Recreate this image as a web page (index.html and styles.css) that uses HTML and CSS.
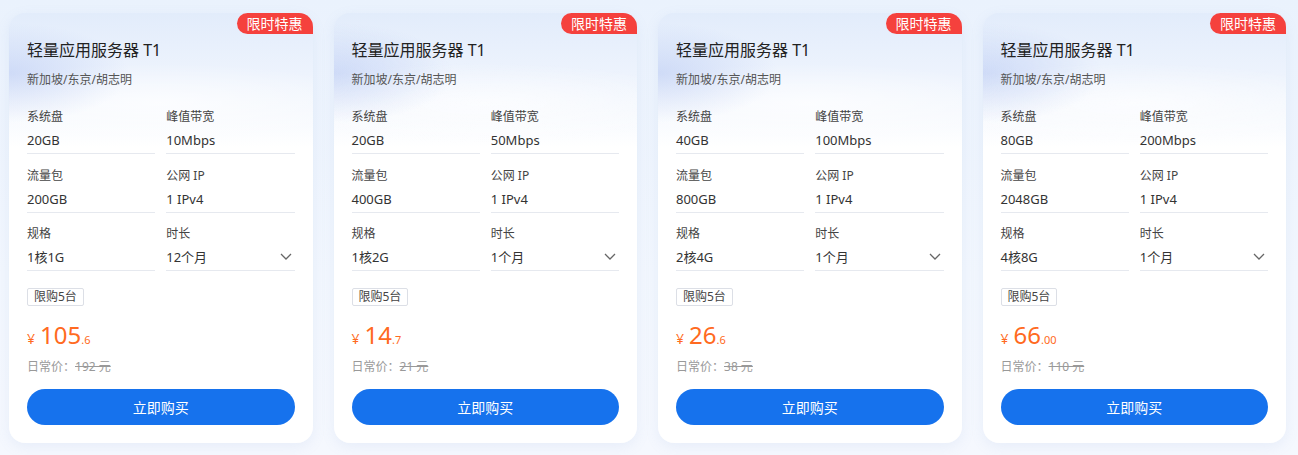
FILE: index.html
```html
<!DOCTYPE html>
<html lang="zh-CN">
<head>
<meta charset="utf-8">
<title>轻量应用服务器</title>
<link rel="stylesheet" href="styles.css">
</head>
<body>
<div class="page">
  <div class="card">
    <div class="badge">限时特惠</div>
    <div class="title">轻量应用服务器 T1</div>
    <div class="sub">新加坡/东京/胡志明</div>
    <div class="specs">
      <div class="spec"><div class="lbl">系统盘</div><div class="val">20GB</div></div>
      <div class="spec"><div class="lbl">峰值带宽</div><div class="val">10Mbps</div></div>
      <div class="spec"><div class="lbl">流量包</div><div class="val">200GB</div></div>
      <div class="spec"><div class="lbl">公网 IP</div><div class="val">1 IPv4</div></div>
      <div class="spec"><div class="lbl">规格</div><div class="val">1核1G</div></div>
      <div class="spec"><div class="lbl">时长</div><div class="val sel">12个月<svg class="chev" viewBox="0 0 12 8" width="12" height="8"><path d="M1 1l5 5 5-5" fill="none" stroke="#666" stroke-width="1.3"/></svg></div></div>
    </div>
    <div class="tag">限购5台</div>
    <div class="price"><span class="yen">¥</span><span class="num">105</span><span class="dec">.6</span></div>
    <div class="orig">日常价：<s>192 元</s></div>
    <button class="buy">立即购买</button>
  </div>
  <div class="card">
    <div class="badge">限时特惠</div>
    <div class="title">轻量应用服务器 T1</div>
    <div class="sub">新加坡/东京/胡志明</div>
    <div class="specs">
      <div class="spec"><div class="lbl">系统盘</div><div class="val">20GB</div></div>
      <div class="spec"><div class="lbl">峰值带宽</div><div class="val">50Mbps</div></div>
      <div class="spec"><div class="lbl">流量包</div><div class="val">400GB</div></div>
      <div class="spec"><div class="lbl">公网 IP</div><div class="val">1 IPv4</div></div>
      <div class="spec"><div class="lbl">规格</div><div class="val">1核2G</div></div>
      <div class="spec"><div class="lbl">时长</div><div class="val sel">1个月<svg class="chev" viewBox="0 0 12 8" width="12" height="8"><path d="M1 1l5 5 5-5" fill="none" stroke="#666" stroke-width="1.3"/></svg></div></div>
    </div>
    <div class="tag">限购5台</div>
    <div class="price"><span class="yen">¥</span><span class="num">14</span><span class="dec">.7</span></div>
    <div class="orig">日常价：<s>21 元</s></div>
    <button class="buy">立即购买</button>
  </div>
  <div class="card">
    <div class="badge">限时特惠</div>
    <div class="title">轻量应用服务器 T1</div>
    <div class="sub">新加坡/东京/胡志明</div>
    <div class="specs">
      <div class="spec"><div class="lbl">系统盘</div><div class="val">40GB</div></div>
      <div class="spec"><div class="lbl">峰值带宽</div><div class="val">100Mbps</div></div>
      <div class="spec"><div class="lbl">流量包</div><div class="val">800GB</div></div>
      <div class="spec"><div class="lbl">公网 IP</div><div class="val">1 IPv4</div></div>
      <div class="spec"><div class="lbl">规格</div><div class="val">2核4G</div></div>
      <div class="spec"><div class="lbl">时长</div><div class="val sel">1个月<svg class="chev" viewBox="0 0 12 8" width="12" height="8"><path d="M1 1l5 5 5-5" fill="none" stroke="#666" stroke-width="1.3"/></svg></div></div>
    </div>
    <div class="tag">限购5台</div>
    <div class="price"><span class="yen">¥</span><span class="num">26</span><span class="dec">.6</span></div>
    <div class="orig">日常价：<s>38 元</s></div>
    <button class="buy">立即购买</button>
  </div>
  <div class="card">
    <div class="badge">限时特惠</div>
    <div class="title">轻量应用服务器 T1</div>
    <div class="sub">新加坡/东京/胡志明</div>
    <div class="specs">
      <div class="spec"><div class="lbl">系统盘</div><div class="val">80GB</div></div>
      <div class="spec"><div class="lbl">峰值带宽</div><div class="val">200Mbps</div></div>
      <div class="spec"><div class="lbl">流量包</div><div class="val">2048GB</div></div>
      <div class="spec"><div class="lbl">公网 IP</div><div class="val">1 IPv4</div></div>
      <div class="spec"><div class="lbl">规格</div><div class="val">4核8G</div></div>
      <div class="spec"><div class="lbl">时长</div><div class="val sel">1个月<svg class="chev" viewBox="0 0 12 8" width="12" height="8"><path d="M1 1l5 5 5-5" fill="none" stroke="#666" stroke-width="1.3"/></svg></div></div>
    </div>
    <div class="tag">限购5台</div>
    <div class="price"><span class="yen">¥</span><span class="num">66</span><span class="dec">.00</span></div>
    <div class="orig">日常价：<s>110 元</s></div>
    <button class="buy">立即购买</button>
  </div>
</div>
</body>
</html>
```

FILE: styles.css
```css
* { box-sizing: border-box; }
html, body { margin: 0; padding: 0; }
body {
  width: 1298px;
  height: 455px;
  overflow: hidden;
  background: linear-gradient(180deg, #eaf2fd 0%, #f2f7fe 60%, #f5f8fe 100%);
  font-family: "Noto Sans", "Noto Sans CJK SC", sans-serif;
  color: #333;
}
.page {
  display: flex;
  gap: 21px;
  padding: 13px 12px 0 9px;
}
.card {
  position: relative;
  flex: 1 1 0;
  min-width: 0;
  height: 430px;
  border-radius: 16px;
  background:
    radial-gradient(ellipse 120px 50px at 0px 60px, rgba(170,190,240,0.45), rgba(170,190,240,0) 100%),
    radial-gradient(ellipse 220px 40px at 150px 90px, rgba(255,255,255,0.7), rgba(255,255,255,0) 100%),
    linear-gradient(180deg, #e2ecfb 0px, #edf3fd 60px, #f6f9fe 100px, #ffffff 135px, #ffffff 100%);
  box-shadow: 0 4px 14px rgba(120, 150, 210, 0.10);
  padding: 26px 18px 17px 18px;
  display: flex;
  flex-direction: column;
  align-items: flex-start;
}
.badge {
  position: absolute;
  top: 0;
  right: 0;
  height: 21px;
  width: 76px;
  background: #f5413d;
  color: #fff;
  font-size: 14px;
  line-height: 21px;
  text-align: center;
  border-radius: 12px 16px 0 12px;
}
.title {
  font-size: 16px;
  line-height: 22px;
  color: #222;
  font-weight: 400;
}
.sub {
  margin-top: 10px;
  font-size: 12px;
  line-height: 18px;
  color: #555;
}
.specs {
  margin-top: 19px;
  width: 100%;
  display: grid;
  grid-template-columns: 1fr 1fr;
  column-gap: 11px;
  row-gap: 12.5px;
}
.spec {
  border-bottom: 1px solid #e6e9ef;
  padding-bottom: 3px;
}
.lbl {
  font-size: 12px;
  line-height: 18px;
  color: #444;
}
.val {
  margin-top: 4px;
  font-size: 13px;
  line-height: 20px;
  color: #333;
}
.sel {
  display: flex;
  align-items: center;
  justify-content: space-between;
}
.chev { margin-right: 3px; }
.tag {
  margin-top: 17px;
  height: 18px;
  padding: 0 6px;
  border: 1px solid #dcdfe6;
  border-radius: 2px;
  font-size: 12px;
  line-height: 16px;
  color: #444;
}
.price {
  margin-top: 14px;
  height: 30px;
  display: flex;
  align-items: baseline;
  color: #ff6a21;
}
.yen { font-size: 14px; margin-right: 5px; }
.num { font-size: 24px; line-height: 30px; }
.dec { font-size: 11px; }
.orig {
  margin-top: 8px;
  font-size: 12px;
  line-height: 18px;
  color: #999;
}
.orig s { color: #999; }
.buy {
  margin-top: 13px;
  width: 100%;
  height: 36px;
  border: none;
  border-radius: 18px;
  background: #1672ed;
  color: #fff;
  font-family: inherit;
  font-size: 14px;
  cursor: pointer;
}
```
